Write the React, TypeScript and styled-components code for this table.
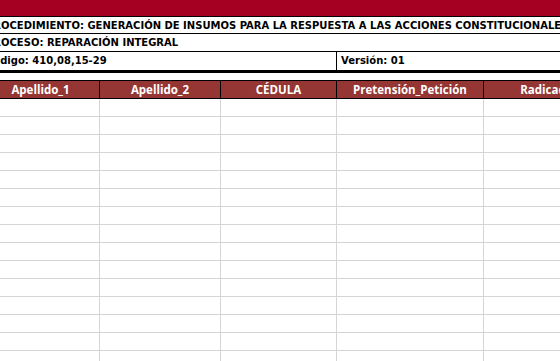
import styled, { createGlobalStyle } from 'styled-components';

const Global = createGlobalStyle`
  html, body {
    margin: 0;
    padding: 0;
    background: #ffffff;
    overflow: hidden;
  }
`;

const Viewport = styled.div`
  width: 560px;
  height: 361px;
  overflow: hidden;
  background: #ffffff;
`;

// the sheet is scrolled a little to the right, so its first column starts off screen
const Sheet = styled.div`
  width: 760px;
  margin-left: -18px;
  display: flex;
  flex-direction: column;
`;

const Band = styled.div`
  height: 16px;
  background: #a50021;
  border-bottom: 1px solid #000000;
`;

const InfoRow = styled.div<{ $h: number; $line?: number }>`
  height: ${({ $h }) => $h}px;
  border-bottom: ${({ $line = 1 }) => $line}px solid #000000;
  display: grid;
  grid-template-columns: 355px 1fr;
`;

const InfoCell = styled.div<{ $split?: boolean; $wide?: boolean }>`
  box-sizing: border-box;
  grid-column: ${({ $wide }) => ($wide ? '1 / -1' : 'auto')};
  padding-left: 4px;
  font-family: 'DejaVu Sans', Verdana, sans-serif;
  font-weight: 700;
  font-size: 10px;
  line-height: 17px;
  color: #000000;
  white-space: nowrap;
  border-right: ${({ $split }) => ($split ? '1px solid #000000' : 'none')};
`;

const Gap = styled.div`
  height: 7px;
`;

const COLS = '118px 121px 116px 147px 126px 1fr';

const HeadRow = styled.div`
  display: grid;
  grid-template-columns: ${COLS};
  height: 19px;
  box-sizing: border-box;
  border-top: 1px solid #000000;
  border-bottom: 1px solid #000000;
  background: #963634;
`;

const HeadCell = styled.div`
  box-sizing: border-box;
  border-right: 1px solid #000000;
  font-family: 'Open Sans', 'Liberation Sans', sans-serif;
  font-weight: 700;
  font-size: 11.5px;
  line-height: 17px;
  color: #ffffff;
  text-align: center;
  white-space: nowrap;
  overflow: hidden;
`;

const DataRow = styled.div`
  display: grid;
  grid-template-columns: ${COLS};
  height: 18px;
  box-sizing: border-box;
  border-bottom: 1px solid #d4d4d4;
`;

const DataCell = styled.div`
  box-sizing: border-box;
  border-right: 1px solid #d4d4d4;
`;

const HEADERS = ['Apellido_1', 'Apellido_2', 'CÉDULA', 'Pretensión_Petición', 'Radicado', ''];

export default function App() {
  const rows = Array.from({ length: 16 }, (_, i) => i);
  return (
    <Viewport>
      <Global />
      <Sheet>
        <Band />
        <InfoRow $h={16}>
          <InfoCell $wide>
            PROCEDIMIENTO: GENERACIÓN DE INSUMOS PARA LA RESPUESTA A LAS ACCIONES CONSTITUCIONALES
          </InfoCell>
        </InfoRow>
        <InfoRow $h={17}>
          <InfoCell $wide>PROCESO: REPARACIÓN INTEGRAL</InfoCell>
        </InfoRow>
        <InfoRow $h={18} $line={3}>
          <InfoCell $split>Código: 410,08,15-29</InfoCell>
          <InfoCell>Versión: 01</InfoCell>
        </InfoRow>
        <Gap />
        <HeadRow>
          {HEADERS.map((h, i) => (
            <HeadCell key={i}>{h}</HeadCell>
          ))}
        </HeadRow>
        {rows.map((r) => (
          <DataRow key={r}>
            {HEADERS.map((_, i) => (
              <DataCell key={i} />
            ))}
          </DataRow>
        ))}
      </Sheet>
    </Viewport>
  );
}
